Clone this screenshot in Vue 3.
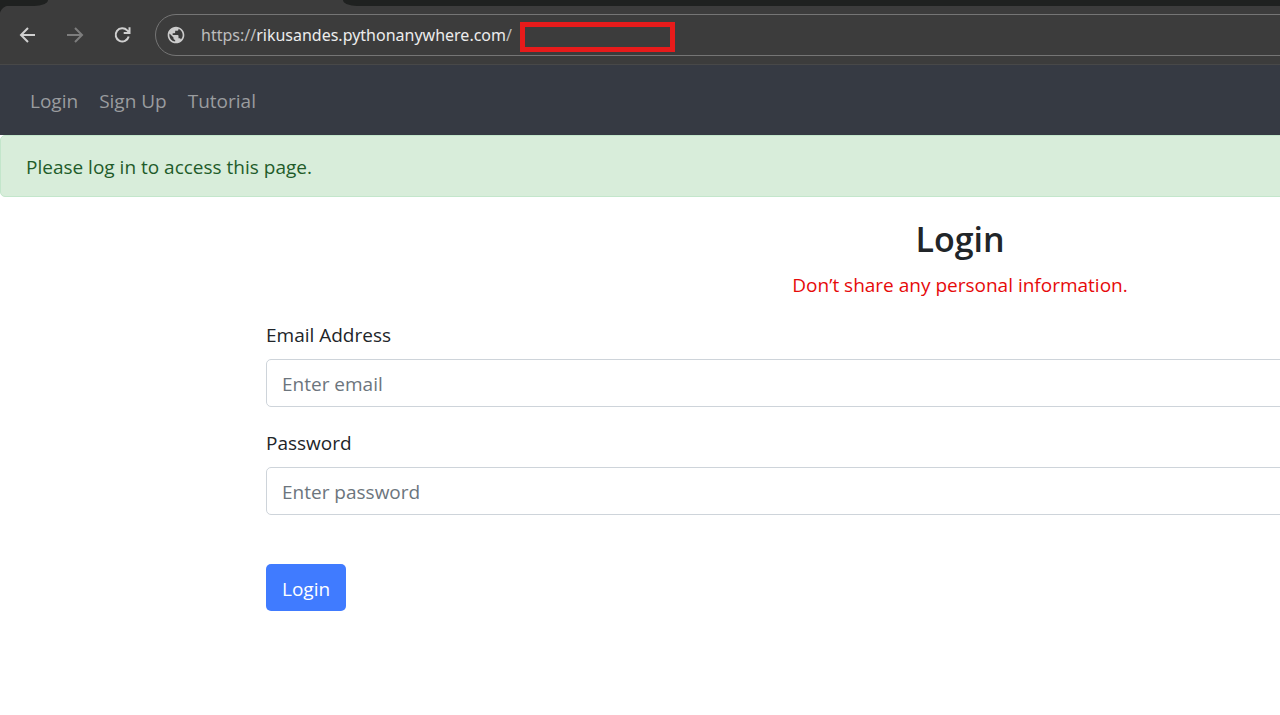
<script setup>
import { ref } from 'vue'

const links = ['Login', 'Sign Up', 'Tutorial']
const email = ref('')
const password = ref('')
</script>

<template>
  <div class="viewport">
    <div class="window">
      <header class="browser">
        <div class="tabstrip">
          <span class="strip-start"></span>
          <span class="tab"></span>
          <span class="strip-rest"></span>
        </div>
        <div class="toolbar">
          <button class="tool" type="button" aria-label="Back">
            <svg width="24" height="24" viewBox="0 0 24 24" fill="none" stroke="#d0d0d0" stroke-width="2">
              <path d="M19 12H5.500M12 5L5 12l7 7" />
            </svg>
          </button>
          <button class="tool" type="button" aria-label="Forward">
            <svg width="24" height="24" viewBox="0 0 24 24" fill="none" stroke="#7d7d7d" stroke-width="2">
              <path d="M4 12h14.500M12 5l7 7-7 7" />
            </svg>
          </button>
          <button class="tool" type="button" aria-label="Reload">
            <svg width="24" height="24" viewBox="0 0 24 24" fill="none" stroke="#d0d0d0" stroke-width="2">
              <path d="M18.700 13.500A6.600 6.600 0 1 1 17.200 7.400L19.200 9.400M19.500 4.300V10.100H13.700" />
            </svg>
          </button>
          <div class="address">
            <svg class="globe" width="20" height="20" viewBox="0 0 24 24" fill="#cccccc">
              <path d="M12 2C6.480 2 2 6.480 2 12s4.480 10 10 10 10-4.480 10-10S17.520 2 12 2zm-1 17.930c-3.950-.490-7-3.850-7-7.930 0-.620.080-1.210.210-1.790L9 15v1c0 1.100.900 2 2 2v1.930zm6.900-2.540c-.260-.810-1-1.390-1.900-1.390h-1v-3c0-.550-.450-1-1-1H8v-2h2c.550 0 1-.450 1-1V7h2c1.100 0 2-.900 2-2v-.410c2.930 1.190 5 4.060 5 7.410 0 2.080-.800 3.970-2.100 5.390z" />
            </svg>
            <span class="url"><span class="dim">https://</span>rikusandes.pythonanywhere.com<span class="dim">/</span></span>
            <span class="marker"></span>
          </div>
        </div>
      </header>

      <nav class="navbar">
        <a v-for="link in links" :key="link" href="#">{{ link }}</a>
      </nav>

      <div class="alert" role="alert">Please log in to access this page.</div>

      <main class="container">
        <form @submit.prevent>
          <h1>Login</h1>
          <p class="warning">Don’t share any personal information.</p>
          <div class="group">
            <label for="email">Email Address</label>
            <input id="email" v-model="email" type="email" placeholder="Enter email" />
          </div>
          <div class="group">
            <label for="password">Password</label>
            <input id="password" v-model="password" type="password" placeholder="Enter password" />
          </div>
          <button class="submit" type="submit">Login</button>
        </form>
      </main>
    </div>
  </div>
</template>

<style>
body {
  margin: 0;
  background: #fff;
}
</style>

<style scoped>
* {
  box-sizing: border-box;
}

.viewport {
  overflow: hidden;
  min-height: 100vh;
  font-family: "Open Sans", "Noto Sans", sans-serif;
  font-size: 19px;
  line-height: 30px;
  color: #212529;
}

/* The window is half again as wide as the visible area. */
.window {
  width: 150%;
}

.browser {
  background: #3c3c3c;
  border-bottom: 1px solid #484848;
}

.tabstrip {
  display: flex;
  height: 6px;
}

.strip-start {
  width: 48px;
  background: #1f2120;
  border-bottom-right-radius: 14px 6px;
}

.tab {
  width: 295px;
}

.strip-rest {
  flex: 1;
  background: #1f2120;
  border-bottom-left-radius: 14px 6px;
}

.toolbar {
  display: flex;
  align-items: center;
  height: 58px;
  padding-left: 16px;
  background: radial-gradient(circle at 10px 10px, #3c3c3c 10px, #1f2120 11px) 0 0 / 10px 10px no-repeat;
}

.tool {
  display: flex;
  margin-right: 23px;
  padding: 0;
  border: 0;
  background: none;
}

.address {
  flex: 1;
  display: flex;
  align-items: center;
  height: 42px;
  margin-left: -2px;
  padding-left: 10px;
  border: 1px solid #757575;
  border-radius: 21px;
}

.url {
  margin-left: 15px;
  font-family: "Noto Sans", sans-serif;
  font-size: 16px;
  color: #ececec;
}

.dim {
  color: #bdbdbd;
}

.marker {
  width: 155px;
  height: 30px;
  margin-left: 8px;
  margin-top: 3px;
  border: 5px solid #e81b1b;
}

.navbar {
  display: flex;
  align-items: center;
  gap: 21px;
  height: 70px;
  padding: 2px 30px 0;
  background: #363a43;
}

.navbar a {
  color: #9a9c9f;
  text-decoration: none;
}

.alert {
  padding: 16px 25px 14px;
  border: 1px solid #c3e6cb;
  border-radius: 5px;
  background: #d8edda;
  color: #1f5c2a;
}

.container {
  max-width: 1426px;
  margin: 0 auto;
  padding: 20px 19px;
}

h1 {
  margin: 0 0 9px;
  font-size: 34px;
  font-weight: 600;
  line-height: 44px;
  text-align: center;
}

.warning {
  margin: 0 0 20px;
  color: #e60a0a;
  text-align: center;
}

.group {
  margin-bottom: 21px;
}

label {
  display: block;
  margin-bottom: 9px;
}

input {
  display: block;
  width: 100%;
  height: 48px;
  padding: 2px 15px 0;
  border: 1px solid #ced4da;
  border-radius: 5px;
  font: inherit;
  color: #495057;
}

input::placeholder {
  color: #6c757d;
  opacity: 1;
}

.submit {
  height: 47px;
  margin-top: 28px;
  padding: 2px 16px 0;
  border: 0;
  border-radius: 5px;
  background: #407bff;
  color: #fff;
  font: inherit;
}
</style>
